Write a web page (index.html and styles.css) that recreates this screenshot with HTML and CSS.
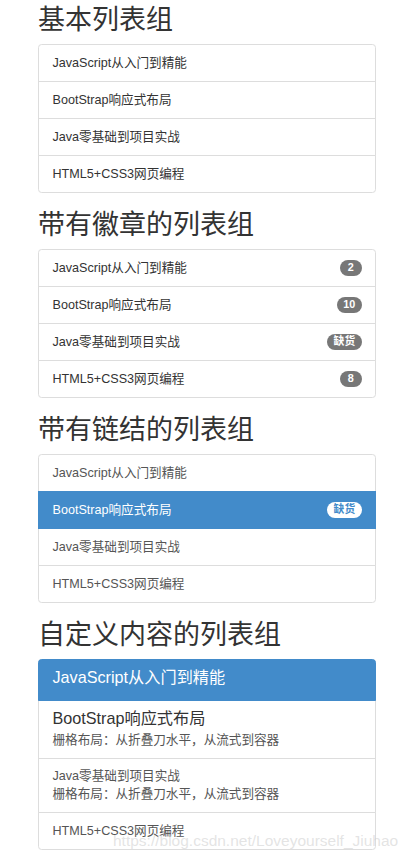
FILE: index.html
```html
<!DOCTYPE html>
<html lang="zh-CN">
<head>
  <meta charset="UTF-8">
  <title>列表组</title>
  <link rel="stylesheet" href="styles.css">
</head>
<body>
  <div class="container">
    <h2>基本列表组</h2>
    <ul class="list-group">
      <li class="list-group-item">JavaScript从入门到精能</li>
      <li class="list-group-item">BootStrap响应式布局</li>
      <li class="list-group-item">Java零基础到项目实战</li>
      <li class="list-group-item">HTML5+CSS3网页编程</li>
    </ul>

    <h2>带有徽章的列表组</h2>
    <ul class="list-group">
      <li class="list-group-item">JavaScript从入门到精能<span class="badge">2</span></li>
      <li class="list-group-item">BootStrap响应式布局<span class="badge">10</span></li>
      <li class="list-group-item">Java零基础到项目实战<span class="badge">缺货</span></li>
      <li class="list-group-item">HTML5+CSS3网页编程<span class="badge">8</span></li>
    </ul>

    <h2>带有链结的列表组</h2>
    <div class="list-group">
      <a href="#" class="list-group-item link">JavaScript从入门到精能</a>
      <a href="#" class="list-group-item link active">BootStrap响应式布局<span class="badge">缺货</span></a>
      <a href="#" class="list-group-item link">Java零基础到项目实战</a>
      <a href="#" class="list-group-item link">HTML5+CSS3网页编程</a>
    </div>

    <h2>自定义内容的列表组</h2>
    <div class="list-group">
      <a href="#" class="list-group-item link active">
        <h4 class="item-heading">JavaScript从入门到精能</h4>
      </a>
      <a href="#" class="list-group-item link">
        <h4 class="item-heading">BootStrap响应式布局</h4>
        <p class="item-text">栅格布局：从折叠刀水平，从流式到容器</p>
      </a>
      <a href="#" class="list-group-item link">
        <div class="item-line">Java零基础到项目实战</div>
        <p class="item-text">栅格布局：从折叠刀水平，从流式到容器</p>
      </a>
      <a href="#" class="list-group-item link">HTML5+CSS3网页编程</a>
    </div>
  </div>
  <div class="watermark">https://blog.csdn.net/Loveyourself_Jiuhao</div>
</body>
</html>
```

FILE: styles.css
```css
body {
  margin: 0;
  font-family: "Liberation Sans", Arial, "Noto Sans CJK SC", sans-serif;
  font-size: 12.6px;
  line-height: 18px;
  color: #333;
  background-color: #fff;
}

.container {
  padding: 6px 30px 0 38px;
}

h2 {
  font-size: 27px;
  font-weight: 400;
  line-height: 29px;
  margin: 18px 0 9px;
}

.container > h2:first-child {
  margin-top: 0;
}

.list-group {
  list-style: none;
  padding: 0;
  margin: 0 0 18px;
}

.list-group-item {
  position: relative;
  display: block;
  padding: 9px 13.5px;
  margin-bottom: -1px;
  background-color: #fff;
  border: 1px solid #ddd;
}

.list-group-item:first-child {
  border-top-left-radius: 3.6px;
  border-top-right-radius: 3.6px;
}

.list-group-item:last-child {
  margin-bottom: 0;
  border-bottom-left-radius: 3.6px;
  border-bottom-right-radius: 3.6px;
}

.link {
  color: #555;
  text-decoration: none;
}

.link.active {
  z-index: 2;
  color: #fff;
  background-color: #428bca;
  border-color: #428bca;
}

.badge {
  float: right;
  display: inline-block;
  min-width: 9px;
  padding: 2.7px 6.3px;
  margin-top: 0.5px;
  font-size: 10.8px;
  font-weight: bold;
  line-height: 1;
  color: #fff;
  text-align: center;
  background-color: #777;
  border-radius: 9px;
}

.active .badge {
  color: #428bca;
  background-color: #fff;
}

.item-heading {
  font-size: 16.2px;
  font-weight: 400;
  line-height: 17px;
  margin: 0 0 4.5px;
  color: #333;
}

.active .item-heading {
  color: #fff;
}

.item-line {
  line-height: 17px;
}

.item-text {
  margin: 0;
  line-height: 18px;
  color: #555;
}

.watermark {
  position: absolute;
  left: 113px;
  top: 832px;
  font-size: 15.5px;
  color: rgba(205, 205, 205, 0.55);
  pointer-events: none;
}
```
